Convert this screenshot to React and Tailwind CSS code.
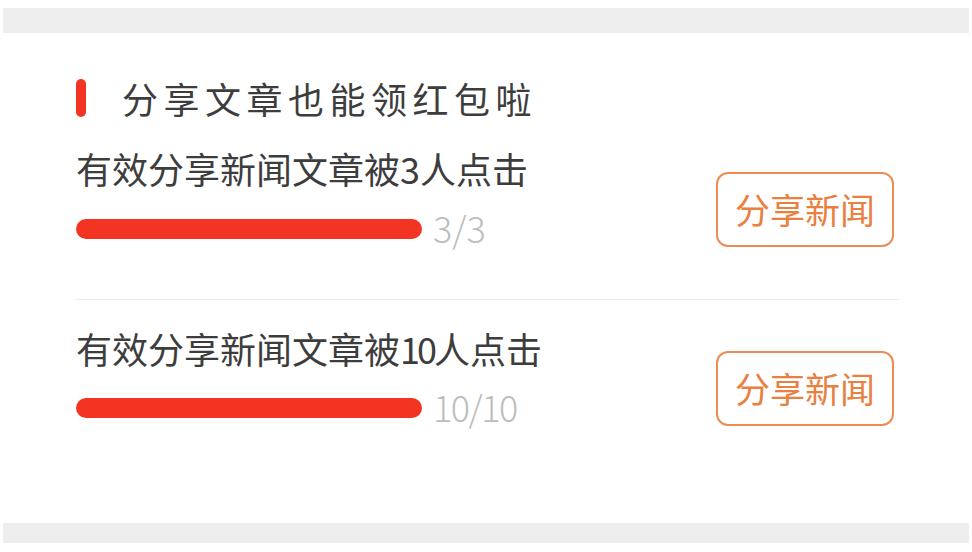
export default function App() {
  const font = { fontFamily: '"Noto Sans CJK SC", "Noto Sans", sans-serif' };
  const Row = ({ children, count, barGap, btnTop }) => (
    <div className="flex justify-between">
      <div className="flex flex-col">
        <div className="h-[40px] leading-[40px] text-[36px] text-[#3d3d3d]">{children}</div>
        <div className={`flex items-center h-[30px] ${barGap}`}>
          <div className="w-[346px] h-[20px] rounded-full bg-[#f43422]" />
          <span className="ml-[11px] -mt-[4px] text-[36px] leading-[30px] text-[#bdbdbd] font-light">{count}</span>
        </div>
      </div>
      <div
        className={`${btnTop} mr-[2px] w-[178px] h-[75px] border-2 border-[#ec8c52] rounded-[12px] flex items-center justify-center text-[35px] text-[#e9803f]`}
      >
        分享新闻
      </div>
    </div>
  );
  return (
    <div className="w-[972px] h-[552px] bg-white flex flex-col" style={font}>
      <div className="mt-[8px] mx-[3px] h-[25px] bg-[#eeeeee]" />
      <div className="px-[76px] flex-1 flex flex-col">
        <div className="mt-[45px] flex items-center h-[40px]">
          <div className="w-[10px] h-[38px] rounded-full bg-[#f43422]" />
          <div className="ml-[36px] text-[36px] leading-[40px] tracking-[5.5px] text-[#3d3d3d]">
            分享文章也能领红包啦
          </div>
        </div>
        <div className="mt-[30px]">
          <Row count="3/3" barGap="mt-[26px]" btnTop="mt-[24px]">
            有效分享新闻文章被3人点击
          </Row>
        </div>
        <div className="mt-[52px] h-px bg-[#eeeeee] mr-[-3px]" />
        <div className="mt-[28px]">
          <Row count={<span className="tracking-[-1.5px]">10/10</span>} barGap="mt-[25px]" btnTop="mt-[23px]">
            有效分享新闻文章被<span className="tracking-[-3px]">10</span>人点击
          </Row>
        </div>
      </div>
      <div className="mb-[9px] mx-[3px] h-[20px] bg-[#eeeeee]" />
    </div>
  );
}
